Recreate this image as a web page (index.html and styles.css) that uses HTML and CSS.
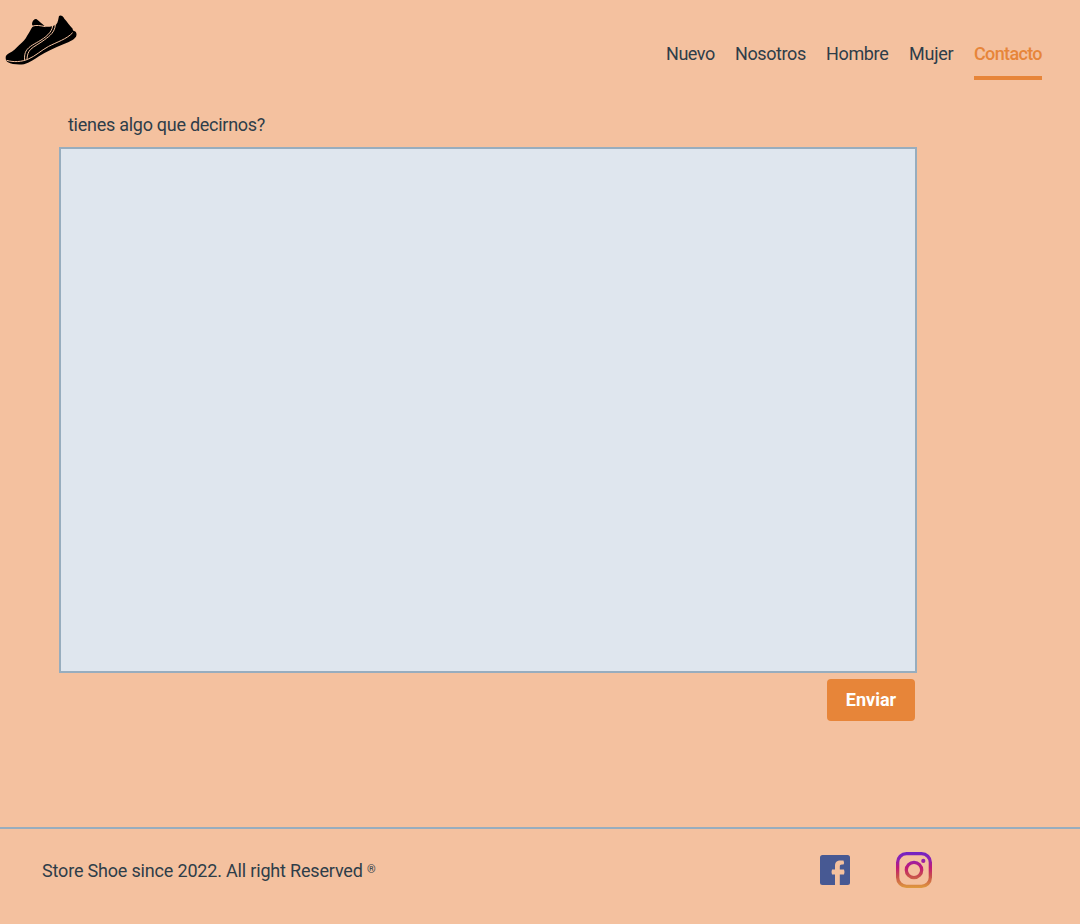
FILE: index.html
```html
<!DOCTYPE html>
<html lang="es">
<head>
<meta charset="utf-8">
<title>Contacto</title>
<link rel="stylesheet" href="styles.css">
</head>
<body>
<header class="header">
  <svg class="logo" viewBox="0 0 240 240" aria-label="Store Shoe">
    <path d="M17 173C17 167 20 164 27 160C41 153 49 144 57 136C69 125 77 117 81 108C87 99 91 90 99 78C95 75 96 71 97 67C99 60 104 56 109 57C114 60 120 67 128 73L136 80C147 82 161 77 168 74C175 67 175 55 177 48C182 44 189 48 193 56C201 65 209 76 218 86C218 91 220 93 225 94C230 98 231 104 228 110C220 121 205 126 190 133C164 144 137 156 118 168C103 178 89 188 72 193C54 195 34 193 24 187C19 183 17 179 17 173Z"/>
    <path class="logo-seam" d="M20 181C40 187 66 186 85 177C107 168 122 152 146 139C169 127 201 117 218 98M74 180C73 171 74 164 76 158C81 143 99 134 115 125C137 112 155 98 158 78M81 177C82 163 85 156 91 149C102 138 120 130 134 119C150 107 164 97 166 75M96 79C108 74 122 77 136 80"/>
  </svg>
  <nav class="nav">
    <a class="nav-link nuevo">Nuevo</a>
    <a class="nav-link nosotros">Nosotros</a>
    <a class="nav-link hombre">Hombre</a>
    <a class="nav-link mujer">Mujer</a>
    <a class="nav-link active">Contacto</a>
  </nav>
</header>
<main class="main">
  <label class="label" for="mensaje"><span>tienes algo que decirnos?</span></label>
  <textarea class="message" id="mensaje"></textarea>
  <button class="send" type="button">Enviar</button>
</main>
<footer class="footer">
  <p class="copy">Store Shoe since 2022. All right Reserved <span class="mark">®</span></p>
  <div class="social">
    <svg class="facebook" viewBox="0 0 30 30" aria-label="Facebook">
      <rect width="30" height="30" rx="2.5" fill="#475993"/>
      <path class="cutout" d="M15 30V19.500H12Q11 17 12 14.500H15V11C15 7.200 17 5.500 20.500 5.500H23.500Q24.500 7.500 23.500 9.500H22C20.200 9.500 19.800 10.300 19.800 11.700V14.500H24Q25 17 24 19.500H19.800V30Z"/>
    </svg>
    <svg class="instagram" viewBox="0 0 36 36" aria-label="Instagram">
      <defs>
        <linearGradient id="ig" gradientUnits="userSpaceOnUse" x1="18" y1="0" x2="18" y2="36">
          <stop offset="0" stop-color="#7024c4"/>
          <stop offset=".21" stop-color="#9021b0"/>
          <stop offset=".44" stop-color="#c21975"/>
          <stop offset=".66" stop-color="#c74c4d"/>
          <stop offset="1" stop-color="#e09b3d"/>
        </linearGradient>
      </defs>
      <g fill="none" stroke="url(#ig)" stroke-width="3.300">
        <rect x="1.650" y="1.650" width="32.700" height="32.700" rx="8.800"/>
        <circle cx="18" cy="18" r="7.700"/>
      </g>
      <circle cx="27.300" cy="8.900" r="2.100" fill="url(#ig)"/>
    </svg>
  </div>
</footer>
</body>
</html>
```
FILE: styles.css
```css
* { box-sizing: border-box; }
body {
  margin: 0;
  height: 924px;
  display: flex;
  flex-direction: column;
  background: #f4c19f;
  color: #2e3d49;
  font: 18px/24px Roboto, sans-serif;
  overflow: hidden;
}
.header {
  display: flex;
  justify-content: space-between;
  height: 80px;
  padding-right: 38px;
}
.logo { width: 80px; height: 80px; }
.logo-seam { fill: none; stroke: #f4c19f; stroke-width: 3; }
.nav { display: flex; gap: 21px; padding-top: 42px; }
.nav-link { white-space: nowrap; }
.nuevo { width: 48px; letter-spacing: -0.45px; }
.nosotros { width: 70px; letter-spacing: -0.4px; }
.hombre { width: 62px; letter-spacing: -0.35px; }
.mujer { width: 44px; letter-spacing: -0.25px; }
.active {
  width: 68px;
  color: #e78539;
  font-weight: 500;
  letter-spacing: -0.65px;
  border-bottom: 4px solid #e78539;
}
.main {
  display: flex;
  flex-direction: column;
  width: 858px;
  margin-left: 59px;
  padding-top: 33px;
}
.label { padding-left: 9px; margin-bottom: 10px; letter-spacing: -0.27px; }
.message {
  height: 526px;
  background: #dfe6ee;
  border: 2px solid #97adbe;
  resize: none;
  outline: none;
}
.send {
  align-self: flex-end;
  width: 88px;
  height: 42px;
  margin: 6px 2px 0 0;
  border: 0;
  border-radius: 4px;
  background: #e78539;
  color: #fff;
  font: 700 18px/24px Roboto, sans-serif;
  padding: 0;
}
.footer {
  display: flex;
  justify-content: space-between;
  align-items: center;
  height: 97px;
  margin-top: auto;
  padding: 0 148px 13px 42px;
  border-top: 2px solid #97adbe;
}
.copy { margin: 0; padding-top: 2px; letter-spacing: -0.18px; }
.mark { font-size: 11px; line-height: 1; vertical-align: 4px; }
.social { display: flex; align-items: center; gap: 46px; }
.facebook { width: 30px; height: 30px; }
.instagram { width: 36px; height: 36px; }
.cutout { fill: #f4c19f; }
```
